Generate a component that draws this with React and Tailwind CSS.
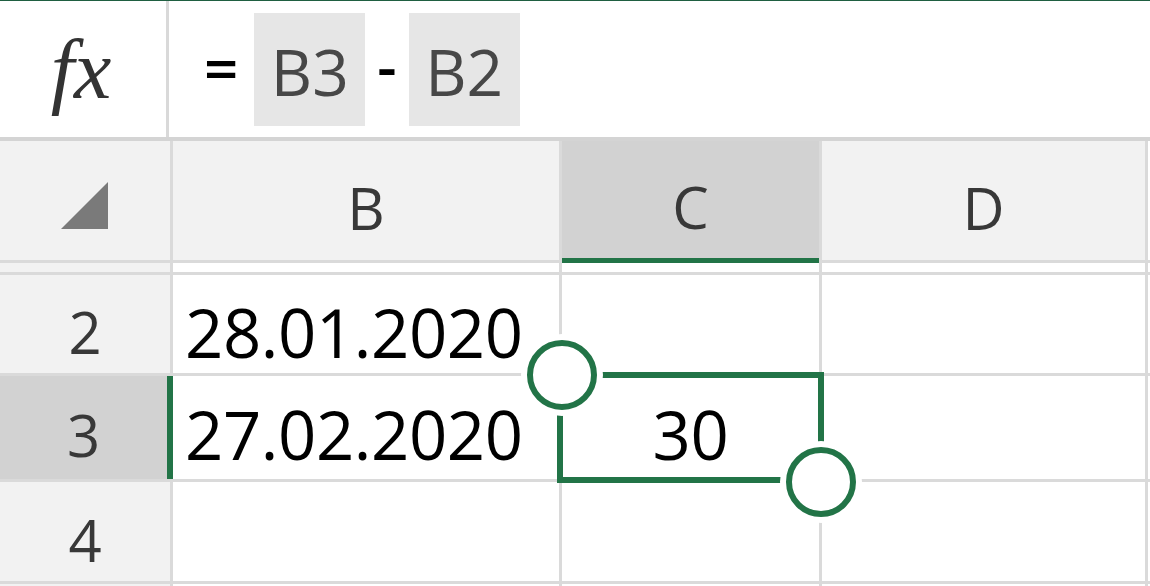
const GREEN = '#227447';

function Handle({ className }) {
  return (
    <div
      className={`absolute w-[70px] h-[70px] rounded-full border-[6px] border-[#227447] bg-white shadow-[0_0_0_6px_#ffffff] ${className}`}
    />
  );
}

function Ref({ children }) {
  return (
    <div className="h-[113px] w-[111px] bg-[#e6e6e6] flex items-center justify-center text-[#474747] text-[64px] leading-none pt-[6px]">
      {children}
    </div>
  );
}

export default function App() {
  return (
    <div
      className="relative w-[1150px] h-[586px] overflow-hidden bg-white"
      style={{ fontFamily: '"Open Sans", "Noto Sans", sans-serif' }}
    >
      <div className="h-[1px] bg-[#1f5f41]" />

      {/* formula bar */}
      <div className="flex h-[136px]">
        <div className="w-[166px] flex items-center justify-center">
          <span
            className="italic text-[84px] leading-none text-[#333333] pt-[2px] pr-[4px]"
            style={{ fontFamily: '"Liberation Serif", "DejaVu Serif", serif' }}
          >
            fx
          </span>
        </div>
        <div className="w-[3px] bg-[#d9d9d9]" />
        <div className="flex items-center pl-[35px]">
          <span className="text-[60px] font-semibold leading-none text-black mr-[16px] pb-[2px]">=</span>
          <Ref>B3</Ref>
          <span className="text-[60px] font-semibold leading-none text-black mx-[12px] pb-[8px]">-</span>
          <Ref>B2</Ref>
        </div>
      </div>
      <div className="h-[4px] bg-[#d4d4d4]" />

      {/* sheet grid */}
      <div className="grid grid-cols-[170px_386px_257px_323px_2px] grid-rows-[119px_9px_98px_103px_99px_2px] gap-[3px] bg-[#dadada] text-[#383838]">
        {/* header row */}
        <div className="bg-[#f2f2f2] flex items-center justify-center pt-[10px]">
          <svg width="48" height="48" viewBox="0 0 48 48">
            <polygon points="47,0 47,47 0,47" fill="#7a7a7a" />
          </svg>
        </div>
        <div className="bg-[#f2f2f2] flex items-center justify-center text-[58px] leading-none pt-[14px]">B</div>
        <div className="bg-[#d2d2d2] flex items-center justify-center text-[58px] leading-none pt-[14px] shadow-[0_3px_0_#227447] border-b-[2px] border-[#227447] z-10">
          C
        </div>
        <div className="bg-[#f2f2f2] flex items-center justify-center text-[58px] leading-none pt-[14px]">D</div>
        <div className="bg-white" />

        {/* hidden row gap */}
        <div className="bg-[#f2f2f2]" />
        <div className="bg-white" />
        <div className="bg-white" />
        <div className="bg-white" />
        <div className="bg-white" />

        {/* row 2 */}
        <div className="bg-[#f2f2f2] flex items-center justify-center text-[58px] leading-none pt-[16px]">2</div>
        <div className="bg-white flex items-center pl-[12px] text-black text-[67px] leading-none tracking-[-0.4px] pt-[16px]">
          28.01.2020
        </div>
        <div className="bg-white" />
        <div className="bg-white" />
        <div className="bg-white" />

        {/* row 3 */}
        <div className="bg-[#d2d2d2] flex items-center justify-center text-[58px] leading-none pt-[14px] border-r-[3px] border-[#227447] shadow-[3px_0_0_#227447] z-10">
          3
        </div>
        <div className="bg-white flex items-center pl-[12px] text-black text-[67px] leading-none tracking-[-0.4px] pt-[14px]">
          27.02.2020
        </div>
        <div className="bg-white flex items-center justify-center text-black text-[67px] leading-none tracking-[-0.4px] pt-[14px]">
          30
        </div>
        <div className="bg-white" />
        <div className="bg-white" />

        {/* row 4 */}
        <div className="bg-[#f2f2f2] flex items-center justify-center text-[58px] leading-none pt-[16px]">4</div>
        <div className="bg-white" />
        <div className="bg-white" />
        <div className="bg-white" />
        <div className="bg-white" />

        {/* tail */}
        <div className="bg-[#f2f2f2]" />
        <div className="bg-white" />
        <div className="bg-white" />
        <div className="bg-white" />
        <div className="bg-white" />
      </div>

      {/* selection overlay */}
      <div className="absolute left-[557px] top-[372px] w-[267px] h-[111px] border-[6px] border-[#227447]" style={{ borderColor: GREEN }} />
      <Handle className="left-[527px] top-[340px]" />
      <Handle className="left-[786px] top-[447px]" />
    </div>
  );
}
